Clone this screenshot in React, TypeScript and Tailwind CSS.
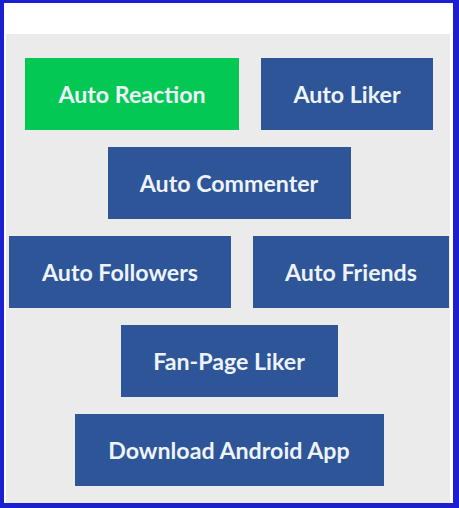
const rows: { label: string; width: string; green?: boolean }[][] = [
  [
    { label: "Auto Reaction", width: "w-[214px]", green: true },
    { label: "Auto Liker", width: "w-[172px]" },
  ],
  [{ label: "Auto Commenter", width: "w-[243px]" }],
  [
    { label: "Auto Followers", width: "w-[222px]" },
    { label: "Auto Friends", width: "w-[196px]" },
  ],
  [{ label: "Fan-Page Liker", width: "w-[217px]" }],
  [{ label: "Download Android App", width: "w-[309px]" }],
];

export default function App() {
  return (
    <div className="h-[508px] w-[459px] border-t-[3px] border-r-[6px] border-b-[5px] border-l-[4px] border-[#1b1fcf] bg-white font-['Lato',_sans-serif]">
      <div className="h-[31px] bg-white" />
      <div className="ml-[2px] mr-[3px] flex flex-col gap-[17px] bg-[#ebebeb] pt-[24px] pb-[17px] pl-[2px]">
        {rows.map((row, i) => (
          <div key={i} className="flex justify-center gap-[22px]">
            {row.map((b) => (
              <a
                key={b.label}
                href="#"
                className={`flex h-[72px] items-center justify-center text-[23.2px] font-bold text-[#eef3fb] ${b.width} ${
                  b.green ? "bg-[#03c853]" : "bg-[#2d5597]"
                }`}
              >
                {b.label}
              </a>
            ))}
          </div>
        ))}
      </div>
    </div>
  );
}
